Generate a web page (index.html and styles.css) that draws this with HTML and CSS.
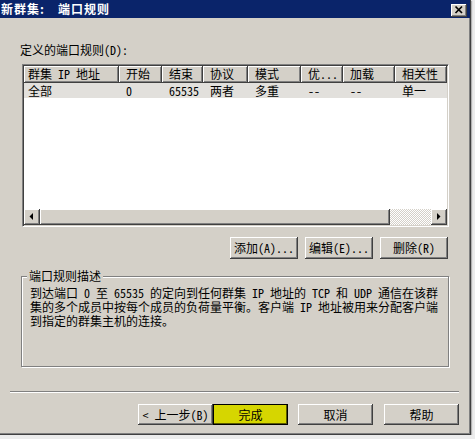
FILE: index.html
```html
<!DOCTYPE html>
<html lang="zh-CN">
<head>
<meta charset="utf-8">
<title>新群集: 端口规则</title>
<link rel="stylesheet" href="styles.css">
</head>
<body>
<div class="window">
  <div class="titlebar">
    <span class="title">新群集:<span class="tgap"></span>端口规则</span>
    <span class="close">
      <svg width="16" height="14" viewBox="0 0 16 14"><path d="M4.5 3.5 L11 10 M11 3.5 L4.5 10" stroke="#000" stroke-width="1.7" fill="none"/></svg>
    </span>
  </div>
  <div class="main">
    <div class="label">定义的端口规则(D):</div>
    <div class="list">
      <div class="lv-head">
        <div class="hc c1">群集 IP 地址</div>
        <div class="hc">开始</div>
        <div class="hc">结束</div>
        <div class="hc">协议</div>
        <div class="hc">模式</div>
        <div class="hc">优...</div>
        <div class="hc">加载</div>
        <div class="hc">相关性</div>
      </div>
      <div class="lv-row">
        <div class="rc c1">全部</div>
        <div class="rc">0</div>
        <div class="rc">65535</div>
        <div class="rc">两者</div>
        <div class="rc">多重</div>
        <div class="rc">--</div>
        <div class="rc">--</div>
        <div class="rc">单一</div>
      </div>
      <div class="lv-space"></div>
      <div class="hscroll">
        <div class="sb-btn"><svg width="16" height="16" viewBox="0 0 16 16"><polygon points="9,4 9,11 5.5,7.5" fill="#000"/></svg></div>
        <div class="sb-thumb"></div>
        <div class="sb-track"></div>
        <div class="sb-btn"><svg width="16" height="16" viewBox="0 0 16 16"><polygon points="6,4 6,11 9.5,7.5" fill="#000"/></svg></div>
      </div>
    </div>
    <div class="btnrow">
      <button class="btn w68">添加(A)...</button>
      <button class="btn w68">编辑(E)...</button>
      <button class="btn w68">删除(R)</button>
    </div>
    <fieldset class="group">
      <legend>端口规则描述</legend>
      <div class="desc">
        <div class="dl">到达端口 0 至 65535 的定向到任何群集 IP 地址的 TCP 和 UDP 通信在该群</div>
        <div class="dl">集的多个成员中按每个成员的负荷量平衡。客户端 IP 地址被用来分配客户端</div>
        <div class="dl">到指定的群集主机的连接。</div>
      </div>
    </fieldset>
  </div>
  <div class="sep"></div>
  <div class="footer">
    <button class="btn w75">&lt; 上一步(B)</button>
    <button class="btn w75 finish">完成</button>
    <button class="btn w75 cancel">取消</button>
    <button class="btn w75 help">帮助</button>
  </div>
</div>
</body>
</html>
```
FILE: styles.css
```css
* { box-sizing: border-box; }
html, body { margin: 0; padding: 0; }
body {
  background: #ececec;
  font-family: "Noto Sans Mono CJK SC", "Noto Sans CJK SC", "Liberation Sans", sans-serif;
  font-size: 12px;
  color: #000;
}
.window {
  width: 471px;
  height: 435px;
  background: #d4d0c8;
  border-right: 1px solid #404040;
  border-bottom: 1px solid #404040;
  box-shadow: inset -1px -1px 0 #808080, 1px 1px 1px rgba(0,0,0,0.25);
  display: flex;
  flex-direction: column;
}
.titlebar {
  height: 18px;
  background: #0a246a;
  display: flex;
  align-items: center;
  justify-content: space-between;
  padding: 0 3px 0 1px;
  flex: none;
}
.title {
  color: #fff;
  font-weight: bold;
  letter-spacing: 1px;
  line-height: 14px;
  font-family: "Noto Sans CJK SC", sans-serif;
}
.tgap { display: inline-block; width: 13px; }
.close {
  width: 16px;
  height: 13px;
  background: #d4d0c8;
  box-shadow: inset -1px -1px #404040, inset 1px 1px #fff, inset -2px -2px #808080;
  display: flex;
  align-items: center;
  justify-content: center;
  margin-top: 2px;
}
.close svg { display: block; }
.main {
  padding: 0 22px 0 20px;
  display: flex;
  flex-direction: column;
}
.label {
  margin-top: 25px;
  line-height: 14px;
  height: 14px;
}
.list {
  margin: 7px 0 0 2px;
  width: 427px;
  height: 163px;
  background: #fff;
  border-top: 1px solid #808080;
  border-left: 1px solid #808080;
  border-right: 1px solid #fff;
  border-bottom: 1px solid #fff;
  box-shadow: inset 1px 1px #404040, inset -1px -1px #d4d0c8;
  padding: 1px;
  display: flex;
  flex-direction: column;
}
.lv-head, .lv-row {
  display: grid;
  grid-template-columns: 95px 43px 41px 45px 53px 42px 52px 52px;
  flex: none;
}
.hc {
  height: 17px;
  line-height: 15px;
  padding-left: 7px;
  background: #d4d0c8;
  border-right: 1px solid #404040;
  border-bottom: 1px solid #404040;
  box-shadow: inset 1px 1px #fff, inset -1px -1px #808080;
  white-space: nowrap;
  overflow: hidden;
}
.lv-row { background: #e2e0dc; }
.rc {
  height: 15px;
  line-height: 15px;
  padding-left: 7px;
  white-space: nowrap;
}
.hc.c1, .rc.c1 { padding-left: 4px; }
.lv-space { flex: 1; }
.hscroll {
  height: 16px;
  display: flex;
  flex: none;
}
.sb-btn {
  width: 16px;
  height: 16px;
  background: #d4d0c8;
  box-shadow: inset -1px -1px #404040, inset 1px 1px #fff, inset -2px -2px #808080;
  flex: none;
}
.sb-btn svg { display: block; }
.sb-thumb {
  width: 350px;
  background: #d4d0c8;
  box-shadow: inset -1px -1px #404040, inset 1px 1px #fff, inset -2px -2px #808080;
  flex: none;
}
.sb-track {
  flex: 1;
  background-color: #d4d0c8;
  background-image: repeating-conic-gradient(#fff 0 25%, #d4d0c8 0 50%);
  background-size: 2px 2px;
}
.btnrow {
  margin-top: 10px;
  display: flex;
  justify-content: flex-end;
  gap: 7px;
}
.btn {
  font: inherit;
  color: #000;
  height: 22px;
  padding: 0;
  margin: 0;
  border: none;
  background: #d4d0c8;
  box-shadow: inset -1px -1px #404040, inset 1px 1px #fff, inset -2px -2px #808080;
  line-height: 20px;
  white-space: nowrap;
}
.w68 { width: 68px; }
.w75 { width: 75px; height: 21px; }
.group {
  margin: 10px 0 0 1px;
  width: 428px;
  height: 98px;
  padding: 0 5px;
  border: 1px solid #808080;
  box-shadow: inset 1px 1px #fff, 1px 1px #fff;
  min-width: 0;
}
.group legend {
  padding: 0 2px;
  margin-left: 0;
  line-height: 14px;
  background: #d4d0c8;
}
.desc {
  margin: 3px 0 0 3px;
}
.dl {
  height: 14px;
  line-height: 14px;
  white-space: nowrap;
}
.sep {
  margin: 24px 11px 0 10px;
  height: 2px;
  border-top: 1px solid #808080;
  border-bottom: 1px solid #fff;
  flex: none;
}
.footer {
  margin-top: 11px;
  padding-right: 11px;
  display: flex;
  justify-content: flex-end;
}
.finish {
  background: #d6d600;
  box-shadow: inset 0 0 0 1px #000, inset -2px -2px #5a5a00;
}
.cancel { margin-left: 10px; }
.help { margin-left: 11px; }
```
